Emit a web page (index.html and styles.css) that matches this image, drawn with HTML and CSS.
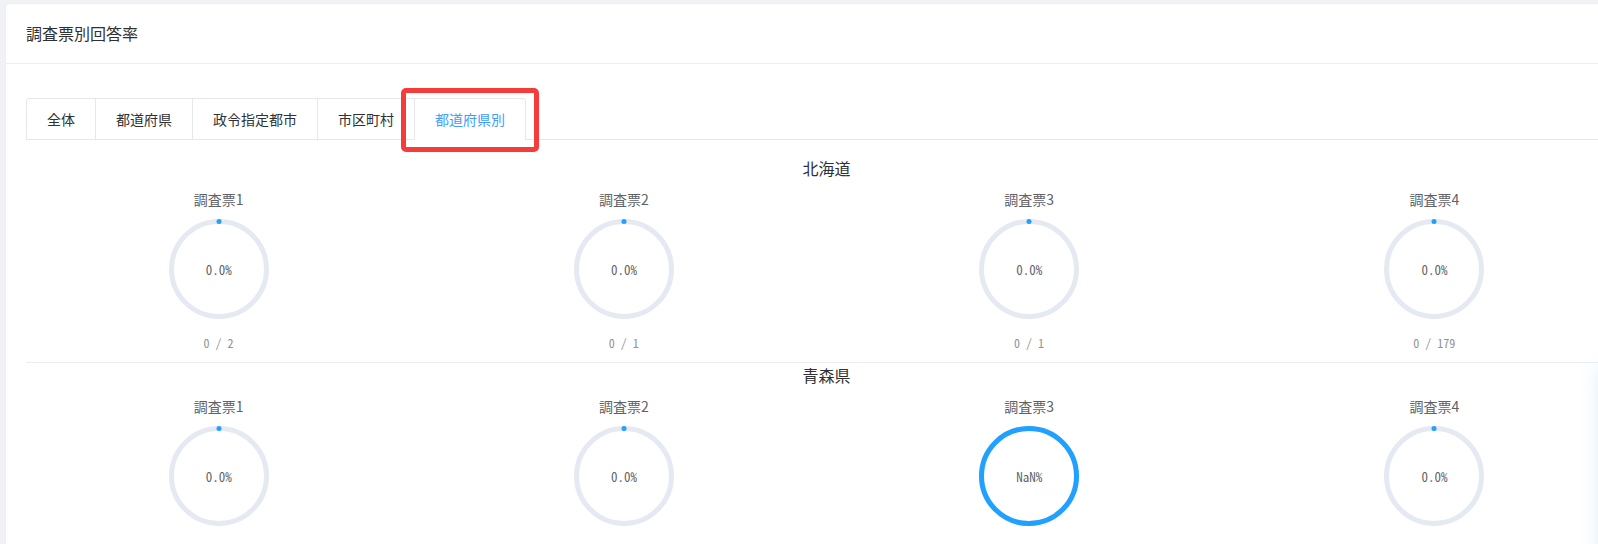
FILE: index.html
```html
<!DOCTYPE html>
<html lang="ja">
<head>
    <meta charset="UTF-8">
    <meta name="viewport" content="width=device-width, initial-scale=1.0">
    <title>調査票別回答率</title>
    <link rel="stylesheet" href="styles.css">
</head>
<body>
    <div class="card">
        <div class="card-header">調査票別回答率</div>
        <div class="card-body">
            <div class="tabs-header">
                <div class="tabs-nav">
                    <div class="tab">全体</div>
                    <div class="tab">都道府県</div>
                    <div class="tab">政令指定都市</div>
                    <div class="tab">市区町村</div>
                    <div class="tab active">都道府県別</div>
                </div>
            </div>

            <div class="region first">
                <div class="region-title">北海道</div>
                <div class="chart-row">
                    <div class="chart">
                        <div class="chart-label">調査票1</div>
                        <div class="progress">
                            <svg viewBox="0 0 100 100"><circle class="track" cx="50" cy="50" r="47.5"/><path class="bar" d="M 50 50 m 0 -47.5 a 47.5 47.5 0 1 1 0 95 a 47.5 47.5 0 1 1 0 -95"/></svg>
                            <span class="progress-text">0.0%</span>
                        </div>
                        <div class="chart-count">0 / 2</div>
                    </div>
                    <div class="chart">
                        <div class="chart-label">調査票2</div>
                        <div class="progress">
                            <svg viewBox="0 0 100 100"><circle class="track" cx="50" cy="50" r="47.5"/><path class="bar" d="M 50 50 m 0 -47.5 a 47.5 47.5 0 1 1 0 95 a 47.5 47.5 0 1 1 0 -95"/></svg>
                            <span class="progress-text">0.0%</span>
                        </div>
                        <div class="chart-count">0 / 1</div>
                    </div>
                    <div class="chart">
                        <div class="chart-label">調査票3</div>
                        <div class="progress">
                            <svg viewBox="0 0 100 100"><circle class="track" cx="50" cy="50" r="47.5"/><path class="bar" d="M 50 50 m 0 -47.5 a 47.5 47.5 0 1 1 0 95 a 47.5 47.5 0 1 1 0 -95"/></svg>
                            <span class="progress-text">0.0%</span>
                        </div>
                        <div class="chart-count">0 / 1</div>
                    </div>
                    <div class="chart">
                        <div class="chart-label">調査票4</div>
                        <div class="progress">
                            <svg viewBox="0 0 100 100"><circle class="track" cx="50" cy="50" r="47.5"/><path class="bar" d="M 50 50 m 0 -47.5 a 47.5 47.5 0 1 1 0 95 a 47.5 47.5 0 1 1 0 -95"/></svg>
                            <span class="progress-text">0.0%</span>
                        </div>
                        <div class="chart-count">0 / 179</div>
                    </div>
                </div>
            </div>

            <div class="region">
                <div class="region-title">青森県</div>
                <div class="chart-row">
                    <div class="chart">
                        <div class="chart-label">調査票1</div>
                        <div class="progress">
                            <svg viewBox="0 0 100 100"><circle class="track" cx="50" cy="50" r="47.5"/><path class="bar" d="M 50 50 m 0 -47.5 a 47.5 47.5 0 1 1 0 95 a 47.5 47.5 0 1 1 0 -95"/></svg>
                            <span class="progress-text">0.0%</span>
                        </div>
                        <div class="chart-count">0 / 1</div>
                    </div>
                    <div class="chart">
                        <div class="chart-label">調査票2</div>
                        <div class="progress">
                            <svg viewBox="0 0 100 100"><circle class="track" cx="50" cy="50" r="47.5"/><path class="bar" d="M 50 50 m 0 -47.5 a 47.5 47.5 0 1 1 0 95 a 47.5 47.5 0 1 1 0 -95"/></svg>
                            <span class="progress-text">0.0%</span>
                        </div>
                        <div class="chart-count">0 / 1</div>
                    </div>
                    <div class="chart">
                        <div class="chart-label">調査票3</div>
                        <div class="progress">
                            <svg viewBox="0 0 100 100"><circle class="track" cx="50" cy="50" r="47.5"/><path class="bar full" d="M 50 50 m 0 -47.5 a 47.5 47.5 0 1 1 0 95 a 47.5 47.5 0 1 1 0 -95"/></svg>
                            <span class="progress-text">NaN%</span>
                        </div>
                        <div class="chart-count">0 / 0</div>
                    </div>
                    <div class="chart">
                        <div class="chart-label">調査票4</div>
                        <div class="progress">
                            <svg viewBox="0 0 100 100"><circle class="track" cx="50" cy="50" r="47.5"/><path class="bar" d="M 50 50 m 0 -47.5 a 47.5 47.5 0 1 1 0 95 a 47.5 47.5 0 1 1 0 -95"/></svg>
                            <span class="progress-text">0.0%</span>
                        </div>
                        <div class="chart-count">0 / 40</div>
                    </div>
                </div>
            </div>
        </div>
    </div>

    <!-- annotation box around the active tab -->
    <div class="highlight"></div>
    <div class="side-panel"></div>
</body>
</html>
```

FILE: styles.css
```css
body {
    font-family: "Noto Sans CJK JP", "Noto Sans", sans-serif;
    margin: 0;
    padding: 3px 0 0 5px;
    background: #f0f2f5;
    height: 544px;
    overflow: hidden;
    position: relative;
    box-sizing: border-box;
}
.card {
    width: 1643px;
    background: #fff;
    border: 1px solid #ebeef5;
    border-radius: 4px;
    box-sizing: border-box;
    min-height: 600px;
}
.card-header {
    padding: 17px 20px 18px;
    line-height: 24px;
    font-size: 16px;
    color: #303133;
    border-bottom: 1px solid #ebeef5;
}
.card-body {
    padding: 34px 20px 20px;
}
.tabs-header {
    border-bottom: 1px solid #e4e7ed;
    margin-bottom: 15px;
    display: flex;
}
.tabs-nav {
    display: flex;
    border: 1px solid #e4e7ed;
    border-bottom: none;
    border-radius: 4px 4px 0 0;
    margin-bottom: -1px;
}
.tab {
    height: 40px;
    line-height: 40px;
    padding: 0 20px;
    font-size: 14px;
    color: #303133;
    border-left: 1px solid #e4e7ed;
    border-bottom: 1px solid transparent;
}
.tab:first-child {
    border-left: none;
}
.tab.active {
    color: #409eff;
    border-bottom-color: #fff;
}
.region {
    border-top: 1px solid #ebeef5;
    padding-bottom: 9px;
}
.region.first {
    border-top-color: transparent;
}
.region-title {
    text-align: center;
    font-size: 16px;
    line-height: 24px;
    color: #303133;
}
.chart-row {
    display: grid;
    grid-template-columns: repeat(4, 1fr);
    margin: 0 -10px;
}
.chart {
    padding: 0 10px;
    display: flex;
    flex-direction: column;
    align-items: center;
}
.chart-label {
    margin-top: 9px;
    font-size: 14px;
    line-height: 20px;
    color: #606266;
}
.progress {
    margin-top: 10px;
    width: 100px;
    height: 100px;
    position: relative;
}
.progress svg {
    width: 100px;
    height: 100px;
    display: block;
}
.track {
    fill: none;
    stroke: #e5e9f2;
    stroke-width: 5;
}
.bar {
    fill: none;
    stroke: #20a0ff;
    stroke-width: 5;
    stroke-linecap: round;
    stroke-dasharray: 0 300;
}
.bar.full {
    stroke-dasharray: none;
}
.progress-text {
    position: absolute;
    left: 0;
    right: 0;
    top: 50%;
    transform: translateY(-50%);
    text-align: center;
    font-family: "Noto Sans Mono CJK JP", "Liberation Mono", monospace;
    font-size: 13px;
    color: #606266;
}
.chart-count {
    margin-top: 14px;
    font-family: "Noto Sans Mono CJK JP", "Liberation Mono", monospace;
    font-size: 12px;
    line-height: 20px;
    color: #909399;
}
.highlight {
    position: absolute;
    left: 401px;
    top: 88px;
    width: 138px;
    height: 64px;
    border: 5px solid #f63b3b;
    border-radius: 5px;
    box-sizing: border-box;
}
.side-panel {
    position: absolute;
    left: 1602px;
    top: 368px;
    width: 40px;
    height: 220px;
    background: #fff;
    box-shadow: 0 0 22px rgba(64, 140, 230, 0.22);
}
```
